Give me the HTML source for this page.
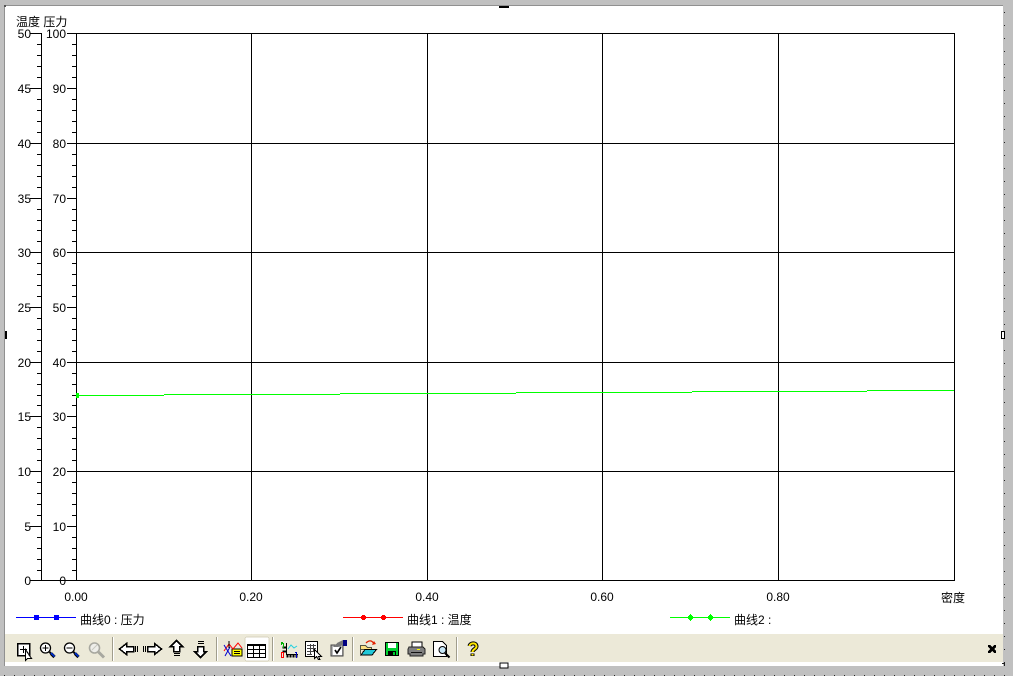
<!DOCTYPE html>
<html><head><meta charset="utf-8"><style>
html,body{margin:0;padding:0;width:1013px;height:676px;overflow:hidden;background:#c0c0c0}
svg{position:absolute;left:0;top:0;display:block}
text{font-family:"Liberation Sans","WenQuanYi Zen Hei","Noto Sans CJK SC",sans-serif;font-size:12px;fill:#000}
.r{text-anchor:end}.c{text-anchor:middle}
</style></head><body>
<svg width="1013" height="676" viewBox="0 0 1013 676">
<defs><pattern id="d" x="4" y="12" width="10" height="13" patternUnits="userSpaceOnUse"><rect width="1" height="1" fill="#222"/></pattern></defs>
<rect width="1013" height="676" fill="#c0c0c0"/>
<rect x="1004" y="0" width="1" height="676" fill="url(#d)"/>
<rect x="0" y="675" width="1013" height="1" fill="url(#d)"/>
<g shape-rendering="crispEdges">
<rect x="5" y="6" width="998" height="660" fill="#fff"/>
<rect x="5" y="5" width="998" height="1" fill="#909090"/>
<rect x="4" y="5" width="1" height="661" fill="#909090"/>
<rect x="5" y="634" width="998" height="28" fill="#ece9d8"/>
<rect x="499" y="6" width="10" height="2" fill="#000"/>
<rect x="5" y="331" width="2" height="8" fill="#000"/>
<rect x="1001.500" y="331.500" width="3" height="7" fill="#fff" stroke="#000"/>
<rect x="500" y="663" width="8" height="5" fill="#fff" stroke="#000"/>
<path d="M1002 663h3v3h-1v-2h-2z" fill="#222"/>
<rect x="4" y="5" width="2" height="2" fill="#555"/>
<!-- grid -->
<g stroke="#000" stroke-width="1" fill="none">
<path d="M76.5 33V580M251.5 33V580M427.5 33V580M602.5 33V580M778.5 33V580M954.5 33V580"/>
<path d="M76 33.5H955M76 143.5H955M76 252.5H955M76 362.5H955M76 471.5H955M41 580.5H955"/>
<path d="M41.5 33V581"/>
<path d="M30 33.5H41M30 88.5H41M30 143.5H41M30 198.5H41M30 252.5H41M30 307.5H41M30 362.5H41M30 416.5H41M30 471.5H41M30 526.5H41M30 580.5H41"/>
<path d="M67 33.5H76M67 88.5H76M67 143.5H76M67 198.5H76M67 252.5H76M67 307.5H76M67 362.5H76M67 416.5H76M67 471.5H76M67 526.5H76M67 580.5H76"/>
<path d="M37 44.5h4M37 55.5h4M37 66.5h4M37 77.5h4M37 99.5h4M37 110.5h4M37 121.5h4M37 132.5h4M37 154.5h4M37 165.5h4M37 176.5h4M37 187.5h4M37 209.5h4M37 220.5h4M37 230.5h4M37 241.5h4M37 263.5h4M37 274.5h4M37 285.5h4M37 296.5h4M37 318.5h4M37 329.5h4M37 340.5h4M37 351.5h4M37 373.5h4M37 384.5h4M37 395.5h4M37 405.5h4M37 427.5h4M37 438.5h4M37 449.5h4M37 460.5h4M37 482.5h4M37 493.5h4M37 504.5h4M37 515.5h4M37 537.5h4M37 548.5h4M37 559.5h4M37 570.5h4"/>
<path d="M72 44.5h4M72 55.5h4M72 66.5h4M72 77.5h4M72 99.5h4M72 110.5h4M72 121.5h4M72 132.5h4M72 154.5h4M72 165.5h4M72 176.5h4M72 187.5h4M72 209.5h4M72 220.5h4M72 230.5h4M72 241.5h4M72 263.5h4M72 274.5h4M72 285.5h4M72 296.5h4M72 318.5h4M72 329.5h4M72 340.5h4M72 351.5h4M72 373.5h4M72 384.5h4M72 395.5h4M72 405.5h4M72 427.5h4M72 438.5h4M72 449.5h4M72 460.5h4M72 482.5h4M72 493.5h4M72 504.5h4M72 515.5h4M72 537.5h4M72 548.5h4M72 559.5h4M72 570.5h4"/>
</g>
<!-- data -->
<path d="M76 395.5H164M164 394.5H340M340 393.5H516M516 392.5H692M692 391.5H867M867 390.5H954" stroke="#0f0" fill="none"/>
<rect x="76" y="393" width="3" height="5" fill="#0f0"/>
<!-- legend -->
<path d="M16 617.5H76" stroke="#0000ff"/><rect x="34" y="615" width="5" height="5" fill="#0000ff"/><rect x="54" y="615" width="5" height="5" fill="#0000ff"/>
<path d="M343 617.5H403" stroke="#f00"/>
<path d="M362 615h3v1h1v3h-1v1h-3v-1h-1v-3h1zM382 615h3v1h1v3h-1v1h-3v-1h-1v-3h1z" fill="#f00"/>
<path d="M670 617.5H730" stroke="#0f0"/>
<path d="M690 614h1v1h1v1h1v3h-1v1h-1v1h-1v-1h-1v-1h-1v-3h1v-1h1zM710 614h1v1h1v1h1v3h-1v1h-1v1h-1v-1h-1v-1h-1v-3h1v-1h1z" fill="#0f0"/>
</g>
<g>
<text x="16" y="26">温度 压力</text>
<text class="r" x="31" y="38">50</text><text class="r" x="31" y="93">45</text><text class="r" x="31" y="148">40</text><text class="r" x="31" y="203">35</text><text class="r" x="31" y="257">30</text><text class="r" x="31" y="312">25</text><text class="r" x="31" y="367">20</text><text class="r" x="31" y="421">15</text><text class="r" x="31" y="476">10</text><text class="r" x="31" y="531">5</text><text class="r" x="31" y="585">0</text>
<text class="r" x="66" y="38">100</text><text class="r" x="66" y="93">90</text><text class="r" x="66" y="148">80</text><text class="r" x="66" y="203">70</text><text class="r" x="66" y="257">60</text><text class="r" x="66" y="312">50</text><text class="r" x="66" y="367">40</text><text class="r" x="66" y="421">30</text><text class="r" x="66" y="476">20</text><text class="r" x="66" y="531">10</text><text class="r" x="66" y="585">0</text>
<text class="c" x="76" y="601">0.00</text><text class="c" x="251" y="601">0.20</text><text class="c" x="427" y="601">0.40</text><text class="c" x="602" y="601">0.60</text><text class="c" x="778" y="601">0.80</text>
<text x="941" y="602">密度</text>
<text x="80" y="624">曲线0 : 压力</text>
<text x="407" y="624">曲线1 : 温度</text>
<text x="734" y="624">曲线2 :</text>
</g>
<!-- toolbar -->
<g shape-rendering="crispEdges">
<path d="M112.500 637V661M216.500 637V661M272.500 637V661M352.500 637V661M456.500 637V661" stroke="#a09d8c"/>
<path d="M113.500 637V661M217.500 637V661M273.500 637V661M353.500 637V661M457.500 637V661" stroke="#fff"/>
<rect x="245" y="637" width="24" height="24" rx="2" fill="#fff" stroke="#d8d4c0"/>
<path d="M247.500 644.500H265.500V657.500H247.500ZM247.500 645.500H265.500M247.500 649.500H265.500M247.500 653.500H265.500M253.500 644.500V657.500M259.500 644.500V657.500" fill="none" stroke="#000"/>
<!-- zoom box -->
<rect x="17.500" y="643.500" width="12" height="12" fill="#fff" stroke="#000" stroke-width="1.500"/>
<path d="M23.500 646V653M20 649.500H27" stroke="#000"/>
<path d="M25.500 649.500V660.500L27.500 658.500H31.500Z" fill="#fff" stroke="#000"/>
<!-- arrows -->
<path d="M119.500 649L126.500 643.500V646.500H133.500V651.500H126.500V654.500Z" fill="#fff" stroke="#000" stroke-width="1.500"/>
<path d="M135 646h1v6h-1zM137 646h1v6h-1zM143 646h1v6h-1zM145 646h1v6h-1z" fill="#000"/>
<path d="M161.500 649L154.500 643.500V646.500H147.500V651.500H154.500V654.500Z" fill="#fff" stroke="#000" stroke-width="1.500"/>
<path d="M176.500 640.500L182.500 646.500H179.500V651.500H173.500V646.500H170.500Z" fill="#fff" stroke="#000" stroke-width="1.500"/>
<path d="M174 653h6v1h-6zM174 655h6v1h-6z" fill="#000"/>
<path d="M200.500 657.500L206.500 651.500H203.500V646.500H197.500V651.500H194.500Z" fill="#fff" stroke="#000" stroke-width="1.500"/>
<path d="M198 641h6v1h-6zM198 643h6v1h-6z" fill="#000"/>
<!-- save -->
<rect x="385.500" y="642.500" width="13" height="13" fill="#00d030" stroke="#000"/>
<rect x="388" y="643" width="8" height="5" fill="#fff"/><rect x="388" y="651" width="8" height="5" fill="#000"/><rect x="393" y="652" width="2" height="3" fill="#00d030"/>
<path d="M386 642h12v1H386zM386 655h12v1H386z" fill="#000"/>
<!-- preview page -->
<path d="M433.500 641.500H442.500L446.500 645.500V656.500H433.500Z" fill="#fff" stroke="#000"/>
<!-- table page -->
<path d="M305.500 641.500H317.500V656.500H305.500Z" fill="#fff" stroke="#000"/>
<path d="M307 645h9v1h-9zM307 648h9v1h-9zM307 651h9v1h-9zM307 654h5v1h-5zM310 644h1v10h-1zM313 644h1v7h-1z" fill="#444"/>
<path d="M314.500 649.500V658.500L316.500 656.500L318.500 659.500H320L318.500 656.500H321.500Z" fill="#fff" stroke="#000"/>
<!-- chart props -->
<path d="M331 645h12v11h-12z" fill="#b8b8b8" stroke="#444"/>
<rect x="333" y="647" width="9" height="8" fill="#fff"/>
<path d="M337 643l6-3v5l-5 2h-5z" fill="#777"/>
<rect x="343" y="640" width="4" height="6" fill="#000080"/>
<!-- axis icon -->
<path d="M286.500 643V654.500H298M287 657h1v-2h-1zM290 657h1v-2h-1zM293 657h1v-2h-1zM296 657h1v-2h-1zM283 647h3v1h-3zM283 651h3v1h-3z" stroke="#000" fill="none" stroke-width="1"/>
<path d="M281 642h2v1h1v5h-1v-4h-1v1h-1z" fill="#00b000"/>
<path d="M281 652h3v6h-3zM282 653v4h1v-4z" fill="#f00" fill-rule="evenodd"/>
<path d="M295 652h2v6h-1v-5h-1z" fill="#0000c0"/>
<!-- print -->
<rect x="412" y="642" width="10" height="6" fill="#fff" stroke="#000"/>
<path d="M409 647h14l2 2v5h-2v2h-13v-2h-2v-5z" fill="#808080" stroke="#222"/>
<rect x="411" y="652" width="11" height="1" fill="#111"/><rect x="417" y="649" width="3" height="1" fill="#ff0"/>
<!-- chart icon -->
<rect x="232" y="649" width="10" height="7" fill="#ff0" stroke="#000"/>
<path d="M234 651h6v1h-6zM234 653h6v1h-6z" fill="#000"/>
<!-- folder -->
<path d="M360.500 645.500H365.500L367.500 647.500H371.500V649.500H360.500V654.500Z" fill="#ffe080" stroke="#554"/>
<path d="M361 655L365 649.500H376.500L372 655Z" fill="#20c8d8" stroke="#000"/>
<!-- X -->
<path d="M988 645h2l2 2 2-2h2v2l-2 2 2 2v2h-2l-2-2-2 2h-2v-2l2-2-2-2z" fill="#000"/>
</g>
<!-- antialiased icon parts -->
<g fill="none">
<path d="M224 651L229 644L233 649L238 643L242 648" stroke="#f00"/><path d="M224 645L231 656M225 656L230 647" stroke="#0000d0"/><path d="M229 641V648" stroke="#000"/>
<path d="M288 649L291 645L294 648L297 646" stroke="#20d0e0"/>
<path d="M335 650l2 3 4-6" stroke="#000" stroke-width="1.600"/>
<path d="M366 643C369 640 372 640 374 644" stroke="#e02000" stroke-width="1.300"/><path d="M372 645l4-1-2-3z" fill="#e02000"/>
<circle cx="45.500" cy="648" r="5" fill="#fff" stroke="#000" stroke-width="1.300"/>
<path d="M49.500 652L51 653.500" stroke="#000" stroke-width="2"/><path d="M51 653.500L54.500 657" stroke="#000" stroke-width="3.200"/><path d="M51 653L54.500 656.500" stroke="#0030d0" stroke-width="1.800"/>
<path d="M42.500 648H48.500M45.500 645V651" stroke="#000"/>
<circle cx="69.500" cy="648" r="5" fill="#fff" stroke="#000" stroke-width="1.300"/>
<path d="M73.500 652L75 653.500" stroke="#000" stroke-width="2"/><path d="M75 653.500L78.500 657" stroke="#000" stroke-width="3.200"/><path d="M75 653L78.500 656.500" stroke="#0030d0" stroke-width="1.800"/>
<path d="M66.500 648H72.500" stroke="#000"/>
<circle cx="94.500" cy="648" r="5" fill="#eeeeea" stroke="#a8a8a0" stroke-width="1.600"/>
<path d="M98.500 652L104 657.500" stroke="#a8a8a0" stroke-width="3"/><path d="M92 650L97 645" stroke="#c8c8c0"/>
<circle cx="442.500" cy="650" r="3.500" fill="#c8e8f8" stroke="#000"/>
<path d="M445 653L449.500 657.500" stroke="#000" stroke-width="2"/>
<path d="M469.500 646C470 643 476 642 476.500 646C477 649 472.500 649 472.500 652" stroke="#000" stroke-width="4"/><path d="M472.500 653.500V656" stroke="#000" stroke-width="4"/>
<path d="M469.500 646C470 643 476 642 476.500 646C477 649 472.500 649 472.500 652" stroke="#ffe800" stroke-width="2"/><path d="M472.500 654V655.500" stroke="#ffe800" stroke-width="2"/>
</g>
</svg>
</body></html>
